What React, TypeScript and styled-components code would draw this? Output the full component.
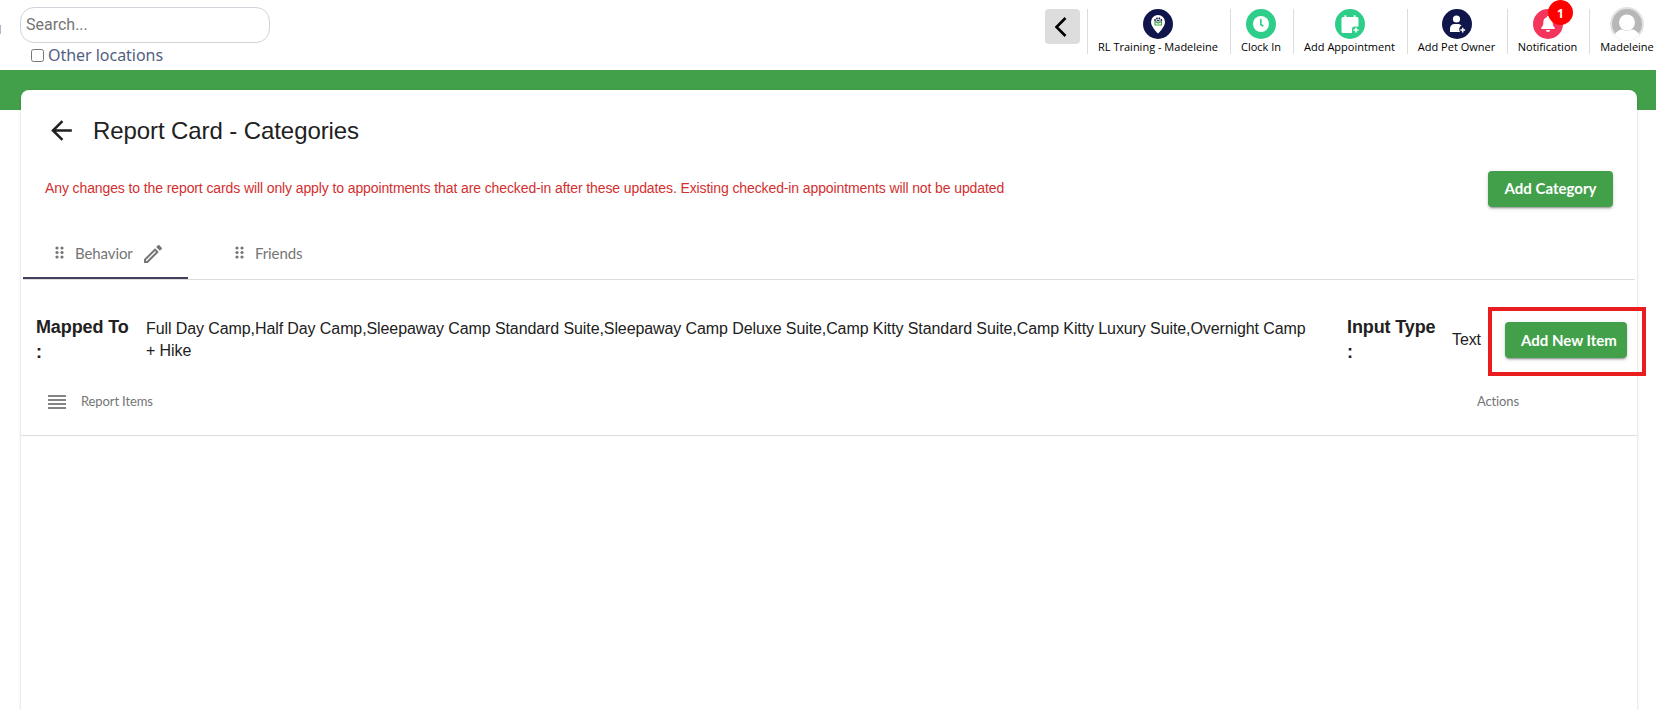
import React from 'react';
import styled, { createGlobalStyle } from 'styled-components';

const GlobalStyle = createGlobalStyle`
  * {
    box-sizing: border-box;
  }

  body {
    margin: 0;
    background: #fff;
    color: #212121;
    font-family: 'Liberation Sans', Arial, sans-serif;
    overflow: hidden;
  }
`;

const Page = styled.div`
  display: flex;
  flex-direction: column;
  width: 1656px;
  height: 710px;
  overflow: hidden;
`;

const Topbar = styled.header`
  display: flex;
  flex: none;
  height: 70px;
  background: #fff;
`;

const MenuEdge = styled.span`
  width: 1px;
  height: 9px;
  margin: 25px 19px 0 0;
  background: #b5b3c4;
`;

const SearchArea = styled.div`
  width: 250px;
  padding-top: 7px;
`;

const SearchInput = styled.input`
  display: block;
  width: 250px;
  height: 36px;
  padding: 0 5px 2px;
  border: 1px solid #ced4da;
  border-radius: 14px;
  outline: none;
  font: 16px Roboto, sans-serif;

  &::placeholder {
    color: #757575;
  }
`;

const OtherLocations = styled.label`
  display: flex;
  align-items: center;
  height: 24px;
  padding-left: 11px;
  gap: 4px;
  color: #525f7f;
  font: 16px/24px 'Noto Sans', sans-serif;
  letter-spacing: -0.03px;

  input {
    width: 13px;
    height: 13px;
    margin: 0;
  }
`;

const BackToggle = styled.button`
  display: flex;
  align-items: center;
  justify-content: center;
  width: 35px;
  height: 35px;
  margin: 9px 7px 0 auto;
  padding: 0;
  border: 0;
  border-radius: 4px;
  background: #ddd;
`;

const Nav = styled.nav`
  display: flex;
  flex: none;
  width: 569px;
  padding-top: 9px;
`;

const NavItem = styled.a<{ $width: number }>`
  position: relative;
  display: flex;
  flex: none;
  flex-direction: column;
  align-items: center;
  width: ${({ $width }) => $width}px;
  height: 45px;
  padding-right: 2px;
  border-left: 1px solid #dcdcdc;
  color: #000;
  font: 11px/15px 'Open Sans', sans-serif;
  white-space: nowrap;

  svg {
    display: block;
    flex: none;
  }
`;

const Badge = styled.span`
  position: absolute;
  top: -9px;
  left: 40px;
  width: 25px;
  height: 25px;
  border-radius: 50%;
  background: #f00;
  color: #fff;
  font: bold 12px/27px 'Open Sans', sans-serif;
  text-align: center;
`;

const GreenBand = styled.div`
  flex: none;
  height: 40px;
  background: #43a04a;
`;

const Card = styled.main`
  flex: none;
  width: 1616px;
  height: 640px;
  margin: -20px 0 0 21px;
  border-radius: 8px 8px 0 0;
  background: #fff;
  box-shadow: 0 1px 3px rgba(0, 0, 0, 0.2);
`;

const TitleRow = styled.div`
  display: flex;
  align-items: center;
  height: 80px;
  padding-left: 25px;
  gap: 16px;
`;

const Title = styled.h1`
  margin: 2px 0 0;
  font-size: 24px;
  font-weight: 400;
  line-height: 32px;
  letter-spacing: -0.09px;
`;

const NoticeRow = styled.div`
  display: flex;
  align-items: center;
  justify-content: space-between;
  height: 37px;
  padding: 0 24px;
`;

const Notice = styled.p`
  margin: 0 0 2px;
  color: #d32f2f;
  font-size: 14px;
  letter-spacing: -0.107px;
`;

const GreenButton = styled.button<{ $width: number; $indent?: number }>`
  flex: none;
  width: ${({ $width }) => $width}px;
  height: 36px;
  padding: 0 0 1px ${({ $indent }) => $indent ?? 0}px;
  border: 0;
  border-radius: 4px;
  background: #43a04a;
  box-shadow: 0 3px 1px -2px rgba(0, 0, 0, 0.2), 0 2px 2px 0 rgba(0, 0, 0, 0.14),
    0 1px 5px 0 rgba(0, 0, 0, 0.12);
  color: #fff;
  font: bold 15px Lato, sans-serif;
  white-space: nowrap;
`;

const Tabs = styled.div`
  display: flex;
  height: 50px;
  margin: 23px 2px 0;
  border-bottom: 1px solid #dcdcdc;
`;

const Tab = styled.div<{ $active?: boolean }>`
  display: flex;
  align-items: center;
  width: ${({ $active }) => ($active ? 165 : 180)}px;
  height: 49px;
  padding-left: ${({ $active }) => ($active ? 32 : 47)}px;
  border-bottom: 2px solid ${({ $active }) => ($active ? '#41415c' : 'transparent')};
  color: #757575;
  font: 15px Lato, sans-serif;
  letter-spacing: -0.1px;

  span {
    margin: 0 0 2px 11px;
  }

  svg {
    flex: none;
  }
`;

const DotsIcon = styled.svg`
  margin-bottom: 3px;
`;

const PencilIcon = styled.svg`
  margin-left: 8px;
`;

const Mapping = styled.section`
  display: flex;
  height: 100px;
  padding: 35px 10px 0 15px;
`;

const Label = styled.strong<{ $width: number }>`
  flex: none;
  width: ${({ $width }) => $width}px;
  font-size: 18px;
  line-height: 25px;
  letter-spacing: -0.12px;
`;

const MappedValue = styled.div`
  flex: none;
  width: 1170px;
  margin: 3px 31px 0 0;
  font-size: 16px;
  line-height: 22px;
  letter-spacing: -0.095px;
`;

const InputValue = styled.div`
  width: 53px;
  padding-top: 14px;
  font-size: 16px;
  line-height: 22px;
  letter-spacing: -0.1px;
`;

const ButtonSlot = styled.div`
  position: relative;
  height: 36px;
  margin-top: 7px;
`;

const Highlight = styled.div`
  position: absolute;
  top: -15px;
  left: -17px;
  width: 158px;
  height: 69px;
  border: 4px solid #e91c1e;
  pointer-events: none;
`;

const ItemsHeader = styled.div`
  display: flex;
  align-items: center;
  height: 56px;
  padding: 0 118px 10px 27px;
  border-bottom: 1px solid #dcdcdc;
  color: #757575;
  font: 13px Lato, sans-serif;
  letter-spacing: -0.12px;
  font-variant-ligatures: none;
`;

const ItemsTitle = styled.span`
  margin: 0 0 3px 15px;
`;

const ActionsTitle = styled.span`
  margin: 0 0 3px auto;
`;

const DragDots = () => (
  <DotsIcon width="9" height="13" viewBox="0 0 9 13" fill="#757575">
    {[2, 6.5, 11].map((y) => (
      <React.Fragment key={y}>
        <circle cx="2" cy={y} r="1.6" />
        <circle cx="7" cy={y} r="1.6" />
      </React.Fragment>
    ))}
  </DotsIcon>
);

const LocationIcon = () => (
  <svg width="30" height="30" viewBox="0 0 30 30">
    <circle cx="15" cy="15" r="15" fill="#10164b" />
    <path d="M15 6a7 7 0 0 0-7 7c0 5 7 11.5 7 11.5S22 18 22 13a7 7 0 0 0-7-7z" fill="#fff" />
    <circle cx="12" cy="11" r="0.9" fill="#10164b" />
    <circle cx="14" cy="9.5" r="0.9" fill="#10164b" />
    <circle cx="16.3" cy="9.5" r="0.9" fill="#10164b" />
    <circle cx="18.3" cy="11" r="0.9" fill="#10164b" />
    <path d="M13 12.300q2-2.500 4.300 0z" fill="#10164b" />
    <path d="M12 12.500l3.200 1.600 3.300-1.600V16H12z" fill="none" stroke="#43a04a" strokeWidth="1.100" />
  </svg>
);

const ClockIcon = () => (
  <svg width="30" height="30" viewBox="0 0 30 30">
    <circle cx="15" cy="15" r="15" fill="#2dce89" />
    <circle cx="15" cy="15" r="8" fill="#fff" />
    <path d="M14.800 10v5.500l2.500 1.700" fill="none" stroke="#2dce89" strokeWidth="1.700" />
  </svg>
);

const CalendarIcon = () => (
  <svg width="30" height="30" viewBox="0 0 30 30">
    <circle cx="15" cy="15" r="15" fill="#2dce89" />
    <path
      d="M8 8h1.500V6.200h1.800V8h7.400V6.200h1.800V8H22a1.500 1.500 0 0 1 1.500 1.500V24H8a1.500 1.500 0 0 1-1.500-1.500v-13A1.500 1.500 0 0 1 8 8z"
      fill="#fff"
    />
    <path d="M17 24.500v-4.500a2.500 2.500 0 0 1 2.500-2.500H25v7z" fill="#2dce89" />
    <path d="M21 18.500v5M18.500 21h5" stroke="#fff" strokeWidth="1.600" />
  </svg>
);

const OwnerIcon = () => (
  <svg width="30" height="30" viewBox="0 0 30 30">
    <circle cx="15" cy="15" r="15" fill="#10164b" />
    <circle cx="14.500" cy="10" r="3.600" fill="#fff" />
    <path
      d="M8 23v-3.500a4.500 4.500 0 0 1 4.500-4.500h4a4.500 4.500 0 0 1 3 1.500c-2.500 1.500-3 4-1.500 6.500z"
      fill="#fff"
    />
    <path d="M20.700 18.700v4.800M18.300 21.100h4.800" stroke="#fff" strokeWidth="1.500" />
  </svg>
);

const BellIcon = () => (
  <svg width="30" height="30" viewBox="0 0 30 30">
    <circle cx="15" cy="15" r="15" fill="#f5365c" />
    <path
      d="M15 7c-.8 0-1.200.5-1.200 1.200-2.200.6-3.400 2.300-3.400 4.500 0 3-.6 4.300-1.800 5.500-.8.800-.3 1.800.6 1.800h11.600c.9 0 1.400-1 .6-1.800-1.200-1.200-1.800-2.500-1.800-5.500 0-2.200-1.200-3.900-3.400-4.500C16.200 7.500 15.800 7 15 7zM13 21a2 2 0 0 0 4 0z"
      fill="#fff"
    />
  </svg>
);

const AvatarSvg = styled.svg`
  margin: -2px 0;
`;

const AvatarIcon = () => (
  <AvatarSvg width="34" height="34" viewBox="0 0 34 34">
    <circle cx="17" cy="17" r="16" fill="#b7b7b7" stroke="#e3e3e3" strokeWidth="2" />
    <circle cx="17" cy="15.500" r="8" fill="#fff" />
    <path d="M4.500 28c2-3.500 4-5 7.500-5.500 3 1.500 7 1.500 10 0 3.500.5 5.500 2 7.500 5.500a16.500 16.500 0 0 1-25 0z" fill="#fff" />
  </AvatarSvg>
);

const App = () => {
  return (
    <Page>
      <GlobalStyle />
      <Topbar>
        <MenuEdge />
        <SearchArea>
          <SearchInput placeholder="Search..." />
          <OtherLocations>
            <input type="checkbox" />
            Other locations
          </OtherLocations>
        </SearchArea>
        <BackToggle aria-label="Back">
          <svg width="35" height="35" viewBox="0 0 35 35">
            <path d="M20.500 9l-9 9 9 9" fill="none" stroke="#000" strokeWidth="2.600" />
          </svg>
        </BackToggle>
        <Nav>
          <NavItem $width={143}>
            <LocationIcon />
            RL Training - Madeleine
          </NavItem>
          <NavItem $width={63}>
            <ClockIcon />
            Clock In
          </NavItem>
          <NavItem $width={114}>
            <CalendarIcon />
            Add Appointment
          </NavItem>
          <NavItem $width={100}>
            <OwnerIcon />
            Add Pet Owner
          </NavItem>
          <NavItem $width={82}>
            <BellIcon />
            <Badge>1</Badge>
            Notification
          </NavItem>
          <NavItem $width={77}>
            <AvatarIcon />
            Madeleine
          </NavItem>
        </Nav>
      </Topbar>
      <GreenBand />
      <Card>
        <TitleRow>
          <svg width="31" height="31" viewBox="0 0 24 24" fill="#212121">
            <path d="M20 11H7.830l5.590-5.590L12 4l-8 8 8 8 1.410-1.410L7.830 13H20v-2z" />
          </svg>
          <Title>Report Card - Categories</Title>
        </TitleRow>
        <NoticeRow>
          <Notice>
            Any changes to the report cards will only apply to appointments that are checked-in after
            these updates. Existing checked-in appointments will not be updated
          </Notice>
          <GreenButton $width={125}>Add Category</GreenButton>
        </NoticeRow>
        <Tabs>
          <Tab $active>
            <DragDots />
            <span>Behavior</span>
            <PencilIcon width="24" height="24" viewBox="0 0 24 24" fill="#757575">
              <path d="M14.060 9.020l.92.92L5.920 19H5v-.92l9.060-9.060M17.660 3c-.25 0-.51.1-.7.290l-1.830 1.830 3.750 3.750 1.830-1.830c.39-.39.39-1.020 0-1.410l-2.340-2.340c-.2-.2-.45-.29-.71-.29zm-3.600 3.190L3 17.250V21h3.750L17.810 9.940l-3.750-3.750z" />
            </PencilIcon>
          </Tab>
          <Tab>
            <DragDots />
            <span>Friends</span>
          </Tab>
        </Tabs>
        <Mapping>
          <Label $width={110}>
            Mapped To
            <br />:
          </Label>
          <MappedValue>
            Full Day Camp,Half Day Camp,Sleepaway Camp Standard Suite,Sleepaway Camp Deluxe Suite,Camp
            Kitty Standard Suite,Camp Kitty Luxury Suite,Overnight Camp + Hike
          </MappedValue>
          <Label $width={105}>
            Input Type
            <br />:
          </Label>
          <InputValue>Text</InputValue>
          <ButtonSlot>
            <GreenButton $width={122} $indent={6}>
              Add New Item
            </GreenButton>
            <Highlight />
          </ButtonSlot>
        </Mapping>
        <ItemsHeader>
          <svg width="18" height="15" viewBox="0 0 18 15" fill="#858585">
            <path d="M0 0h18v2H0zM0 4h18v2H0zM0 8h18v2H0zM0 12h18v2H0z" />
          </svg>
          <ItemsTitle>Report Items</ItemsTitle>
          <ActionsTitle>Actions</ActionsTitle>
        </ItemsHeader>
      </Card>
    </Page>
  );
};

export default App;
